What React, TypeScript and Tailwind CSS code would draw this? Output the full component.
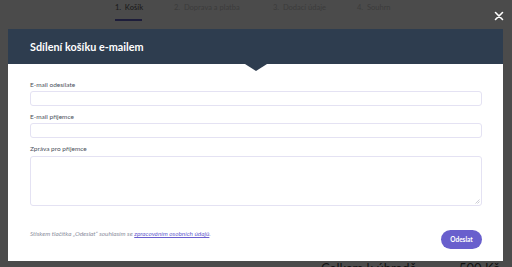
import React from "react";

export default function App() {
  const font = { fontFamily: "Lato, 'Noto Sans', sans-serif" };
  return (
    <div
      className="relative w-[512px] h-[267px] overflow-hidden bg-[#4b4b4b]"
      style={font}
    >
      {/* underlying page */}
      <div className="flex flex-col h-full">
        <div className="flex items-start pl-[115px] pt-[3px] text-[7.5px] leading-[9px]">
          <div className="flex flex-col w-[59px]">
            <span className="text-[#1e1e1e] font-semibold">1.&nbsp; Košík</span>
            <div className="mt-[7px] w-[27px] h-[1.5px] bg-[#1d1d3a]" />
          </div>
          <span className="text-[#3b3b3b] w-[99px]">2.&nbsp; Doprava a platba</span>
          <span className="text-[#3b3b3b] w-[84px]">3.&nbsp; Dodací údaje</span>
          <span className="text-[#3b3b3b]">4.&nbsp; Souhrn</span>
        </div>
        <div className="flex-1" />
        <div className="flex items-start pl-[321px] text-[13px] leading-[14px] text-[#121212] -mb-[8px]">
          <span className="w-[138px]">Celkem k úhradě</span>
          <span>500 Kč</span>
        </div>
      </div>

      {/* close */}
      <svg
        className="absolute left-[494px] top-[11px]"
        width="10"
        height="10"
        viewBox="0 0 10 10"
      >
        <path d="M1.5 1.5 L8.5 8.5 M8.5 1.5 L1.5 8.5" stroke="#ffffff" strokeWidth="1.6" strokeLinecap="round" />
      </svg>

      {/* modal */}
      <div className="absolute left-[8px] top-[29px] w-[495px] h-[232px] bg-white flex flex-col">
        <div className="relative h-[35px] bg-[#2e3d4f] flex items-center px-[22px]">
          <span className="text-white font-bold text-[10.8px] leading-[14px] pt-[1px]">
            Sdílení košíku e-mailem
          </span>
          <div className="absolute left-[237px] top-[35px] w-0 h-0 border-l-[11px] border-r-[11px] border-t-[7px] border-l-transparent border-r-transparent border-t-[#2e3d4f]" />
        </div>
        <div className="flex flex-col px-[22px] pt-[16px] text-[6.5px]">
          <label className="leading-[10px] text-[#4a515b]">E-mail odesílate</label>
          <div className="mt-[1px] h-[15px] w-[452px] rounded-[3px] border border-[#e4e2f3]" />
          <label className="mt-[6px] leading-[10px] text-[#4a515b]">E-mail příjemce</label>
          <div className="mt-[1px] h-[15px] w-[452px] rounded-[3px] border border-[#e4e2f3]" />
          <label className="mt-[6px] leading-[10px] text-[#4a515b]">Zpráva pro příjemce</label>
          <div className="relative mt-[2px] h-[50px] w-[452px] rounded-[3px] border border-[#e4e2f3]">
            <svg className="absolute right-[1px] bottom-[1px]" width="5" height="5" viewBox="0 0 5 5">
              <path d="M4.5 0.5 L0.5 4.5 M4.5 2.5 L2.5 4.5" stroke="#b8b8c4" strokeWidth="0.7" />
            </svg>
          </div>
          <div className="mt-[24px] flex items-start justify-between w-[452px]">
            <span className="italic text-[6.4px] leading-[8px] text-[#8c8fa0]">
              Stiskem tlačítka „Odeslat“ souhlasím se{" "}
              <span className="underline text-[#6a5fcf]">zpracováním osobních údajů</span>.
            </span>
            <button className="h-[19px] w-[41px] rounded-full bg-[#695fcd] text-white font-bold text-[6.5px] leading-[8px] flex items-center justify-center">
              Odeslat
            </button>
          </div>
        </div>
      </div>
    </div>
  );
}
